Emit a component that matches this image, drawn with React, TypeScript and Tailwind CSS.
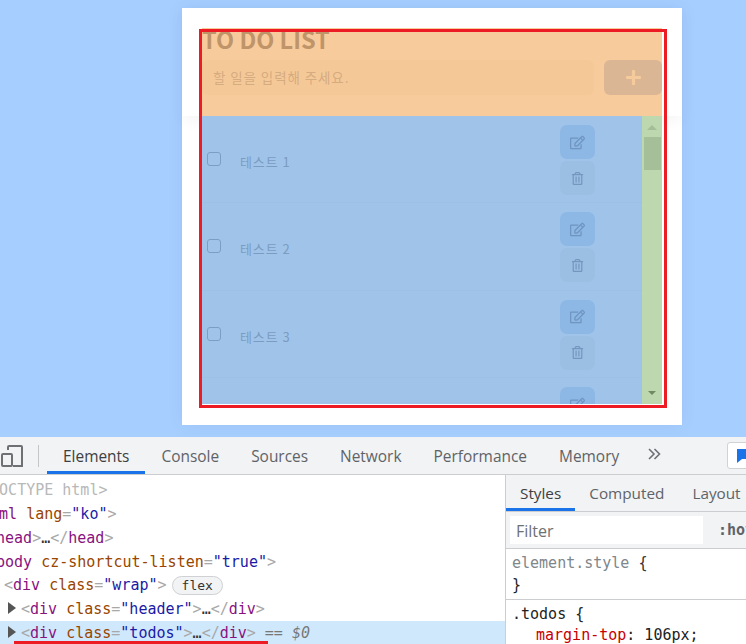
import React from "react";
import { FaPlus, FaRegEdit, FaRegTrashAlt } from "react-icons/fa";

const kr = "font-['Noto_Sans_CJK_KR','Noto_Sans',sans-serif]";
const ui = "font-['Open_Sans','Noto_Sans',sans-serif]";
const mono = "font-['DejaVu_Sans_Mono','Liberation_Mono',monospace]";

const P = ({ children }: { children: React.ReactNode }) => <span className="text-[#a8a8a8]">{children}</span>;
const T = ({ children }: { children: React.ReactNode }) => <span className="text-[#881280]">{children}</span>;
const A = ({ children }: { children: React.ReactNode }) => <span className="text-[#994500]">{children}</span>;
const V = ({ children }: { children: React.ReactNode }) => <span className="text-[#1a1aa6]">{children}</span>;

function TodoRow({ label, last }: { label: string; last?: boolean }) {
  return (
    <div className={`flex h-[87.4px] shrink-0 items-start pt-[9px] ${last ? "" : "border-b border-[#9dc1e6]"}`}>
      <div className="flex h-[71px] w-[358px] items-center">
        <div className="ml-[5px] mt-[-3px] h-[14px] w-[14px] rounded-[3px] border border-[#7b9ec6]" />
        <div className={`ml-[19px] mt-[2px] text-[13px] tracking-[0.9px] text-[#7c9bc0] ${kr}`}>{label}</div>
      </div>
      <div className="flex w-[35px] flex-col gap-[2px]">
        <div className="flex h-[34px] w-[35px] items-center justify-center rounded-[7px] bg-[#8db7e5] text-[#6f95c0]">
          <FaRegEdit className="h-[15px] w-[15px]" />
        </div>
        <div className="flex h-[34px] w-[35px] items-center justify-center rounded-[7px] bg-[#9bbee3] text-[#7497c0]">
          <FaRegTrashAlt className="h-[13px] w-[13px]" />
        </div>
      </div>
    </div>
  );
}

function Tab({ label, active }: { label: string; active?: boolean }) {
  return (
    <div className={`flex h-full shrink-0 items-center px-4 text-[15.45px] ${active ? "border-b-[3px] border-[#1a73e8] pt-[5px] text-[#3c4043]" : "pt-[2px] text-[#5f6368]"}`}>
      {label}
    </div>
  );
}

function SubTab({ label, active }: { label: string; active?: boolean }) {
  return (
    <div className={`flex h-full shrink-0 items-center px-[14px] text-[15.3px] ${active ? "border-b-[3px] border-[#1a73e8] pt-[3px] text-[#3c4043]" : "text-[#5f6368]"}`}>
      {label}
    </div>
  );
}

function CodeRow({ children, className = "" }: { children: React.ReactNode; className?: string }) {
  return <div className={`h-[23.8px] whitespace-pre leading-[25.5px] ${className}`}>{children}</div>;
}

const Caret = () => <span className="mr-[5px] inline-block h-0 w-0 border-y-[6px] border-l-[8px] border-y-transparent border-l-[#555]" />;

export default function App() {
  return (
    <div className="flex h-[644px] w-[746px] flex-col overflow-hidden bg-[#a6cfff]">
      {/* page preview */}
      <div className="h-[437px] shrink-0 pl-[182px] pt-2">
        <div className="relative h-[417px] w-[500px] bg-white shadow-[0_0_16px_rgba(0,40,120,0.07)]">
          <div className="h-[108px] bg-white px-5 pt-[19.5px] shadow-[0_6px_14px_rgba(0,0,0,0.04)]">
            <div className="h-[88.5px] bg-[#f7cb9c]">
              <div className={`h-[24px] text-[23.5px] font-bold leading-[22px] text-[#bf9468] ${kr}`}>TO DO LIST</div>
              <div className="mt-[8px] flex h-[35px] gap-[10px]">
                <div className={`flex h-[35px] w-[392px] items-center rounded-[6px] bg-[#f5c997] pl-[11px] text-[13.5px] tracking-[0.9px] text-[#d5ab80] ${kr}`}>
                  할 일을 입력해 주세요.
                </div>
                <div className="flex h-[35px] w-[58px] items-center justify-center rounded-[6px] bg-[#dbb695] text-[#f6cb9b]">
                  <FaPlus className="h-[17px] w-[17px]" />
                </div>
              </div>
            </div>
          </div>
          <div className="relative mx-5 flex h-[288px] w-[460px] overflow-hidden">
            <div className="flex w-[440px] flex-col overflow-hidden bg-[#a0c4e9]">
              <TodoRow label="테스트 1" />
              <TodoRow label="테스트 2" />
              <TodoRow label="테스트 3" />
              <TodoRow label="테스트 4" last />
            </div>
            <div className="flex w-5 flex-col items-center justify-between bg-[#bdd7af] pb-[9px] pt-[9px]">
              <div className="flex w-full flex-col items-center gap-[7px]">
                <div className="h-0 w-0 border-x-[5px] border-b-[5px] border-x-transparent border-b-[#a4bf97]" />
                <div className="h-[33px] w-[17px] bg-[#a5bf98]" />
              </div>
              <div className="h-0 w-0 border-x-[4px] border-t-[4px] border-x-transparent border-t-[#6f8a60]" />
            </div>
          </div>
          {/* annotation frame */}
          <div className="absolute left-[17px] top-[21px] h-[379px] w-[468px] border-[3px] border-[#ed1c24]" />
        </div>
      </div>

      {/* devtools */}
      <div className="flex min-h-0 flex-1 flex-col bg-white">
        <div className={`flex h-[38px] shrink-0 items-center overflow-hidden border-b border-[#cbcdd1] bg-[#f1f3f4] ${ui}`}>
          <svg className="ml-[1px] h-[22px] w-[22px] shrink-0" viewBox="0 0 22 22" fill="none" stroke="#6e7074" strokeWidth="2">
            <path d="M7 5V2a1 1 0 0 1 1-1h12a1 1 0 0 1 1 1v19a0 0 0 0 1 0 0H12" />
            <rect x="1" y="9" width="10" height="12" rx="1" />
          </svg>
          <div className="ml-[15px] mr-[8px] h-[22px] w-[1px] shrink-0 bg-[#c4c6c9]" />
          <Tab label="Elements" active />
          <Tab label="Console" />
          <Tab label="Sources" />
          <Tab label="Network" />
          <Tab label="Performance" />
          <Tab label="Memory" />
          <svg className="ml-[12px] h-[12px] w-[14px] shrink-0 -translate-y-[2px]" viewBox="0 0 14 12" fill="none" stroke="#6e7074" strokeWidth="1.6">
            <path d="M2 1l5 5-5 5M7.5 1l5 5-5 5" />
          </svg>
          <div className="ml-[66px] flex h-[27px] w-[30px] shrink-0 items-center rounded-[3px] border border-[#d0d2d6] bg-white pl-[9px]">
            <svg className="h-[15px] w-[15px]" viewBox="0 0 15 15" fill="#1a73e8"><path d="M0 1h15v10H5l-5 4z" /></svg>
          </div>
        </div>

        <div className="flex min-h-0 flex-1">
          <div className={`relative w-[505px] shrink-0 overflow-hidden pt-[3.2px] text-[15px] ${mono}`}>
            <CodeRow className="-ml-[28px] text-[#b8b8b8]">{"<!DOCTYPE html>"}</CodeRow>
            <CodeRow className="-ml-[28px]"><P>{"<"}</P><T>html</T> <A>lang</A><P>=</P><V>"ko"</V><P>{">"}</P></CodeRow>
            <CodeRow className="-ml-[13px]"><P>{"<"}</P><T>head</T><P>{">"}</P><span className="text-[#333]">…</span><P>{"</"}</P><T>head</T><P>{">"}</P></CodeRow>
            <CodeRow className="-ml-[13px]"><P>{"<"}</P><T>body</T> <A>cz-shortcut-listen</A><P>=</P><V>"true"</V><P>{">"}</P></CodeRow>
            <CodeRow className="ml-[4px]">
              <P>{"<"}</P><T>div</T> <A>class</A><P>=</P><V>"wrap"</V><P>{">"}</P>
              <span className="ml-[5px] inline-flex h-[19px] items-center rounded-[10px] border border-[#cfd1d4] bg-[#f1f3f4] px-[9px] align-middle text-[13px] leading-none text-[#333]">flex</span>
            </CodeRow>
            <CodeRow className="ml-[8px]">
              <Caret /><P>{"<"}</P><T>div</T> <A>class</A><P>=</P><V>"header"</V><P>{">"}</P><span className="text-[#333]">…</span><P>{"</"}</P><T>div</T><P>{">"}</P>
            </CodeRow>
            <CodeRow className="bg-[#cfe8fc] pl-[8px]">
              <Caret /><P>{"<"}</P><T>div</T> <A>class</A><P>=</P><V>"todos"</V><P>{">"}</P><span className="text-[#333]">…</span><P>{"</"}</P><T>div</T><P>{">"}</P><span className="text-[#777]"> == <i>$0</i></span>
            </CodeRow>
            <div className="absolute bottom-0 left-[14px] h-[3px] w-[254px] bg-[#ed1c24]" />
          </div>

          <div className="min-w-0 flex-1 overflow-hidden border-l border-[#cbcdd1]">
            <div className={`flex h-[37px] items-center border-b border-[#cbcdd1] bg-[#f1f3f4] ${ui}`}>
              <SubTab label="Styles" active />
              <SubTab label="Computed" />
              <SubTab label="Layout" />
            </div>
            <div className={`flex h-[37px] items-center border-b border-[#cbcdd1] bg-[#f1f3f4] pl-[4px] ${ui}`}>
              <div className="flex h-[28px] w-[193px] shrink-0 items-center bg-white pl-[6px] pt-[2px] text-[16px] text-[#6e7074]">Filter</div>
              <div className={`ml-[15px] whitespace-pre text-[15px] font-bold text-[#5f6368] ${mono}`}>:hov</div>
            </div>
            <div className={`h-[51px] border-b border-[#cbcdd1] px-[6px] pt-[3px] text-[15px] ${mono}`}>
              <div className="h-[22px] whitespace-pre leading-[22px]"><span className="text-[#80868b]">element.style</span> <span className="text-[#333]">{"{"}</span></div>
              <div className="h-[22px] leading-[22px] text-[#222]">{"}"}</div>
            </div>
            <div className={`px-[6px] pt-[4px] text-[15px] text-[#222] ${mono}`}>
              <div className="h-[21px] whitespace-pre leading-[21px]">.todos {"{"}</div>
              <div className="h-[21px] whitespace-pre pl-[24px] leading-[21px]"><span className="text-[#c80000]">margin-top</span>: 106px;</div>
            </div>
          </div>
        </div>
      </div>
    </div>
  );
}
